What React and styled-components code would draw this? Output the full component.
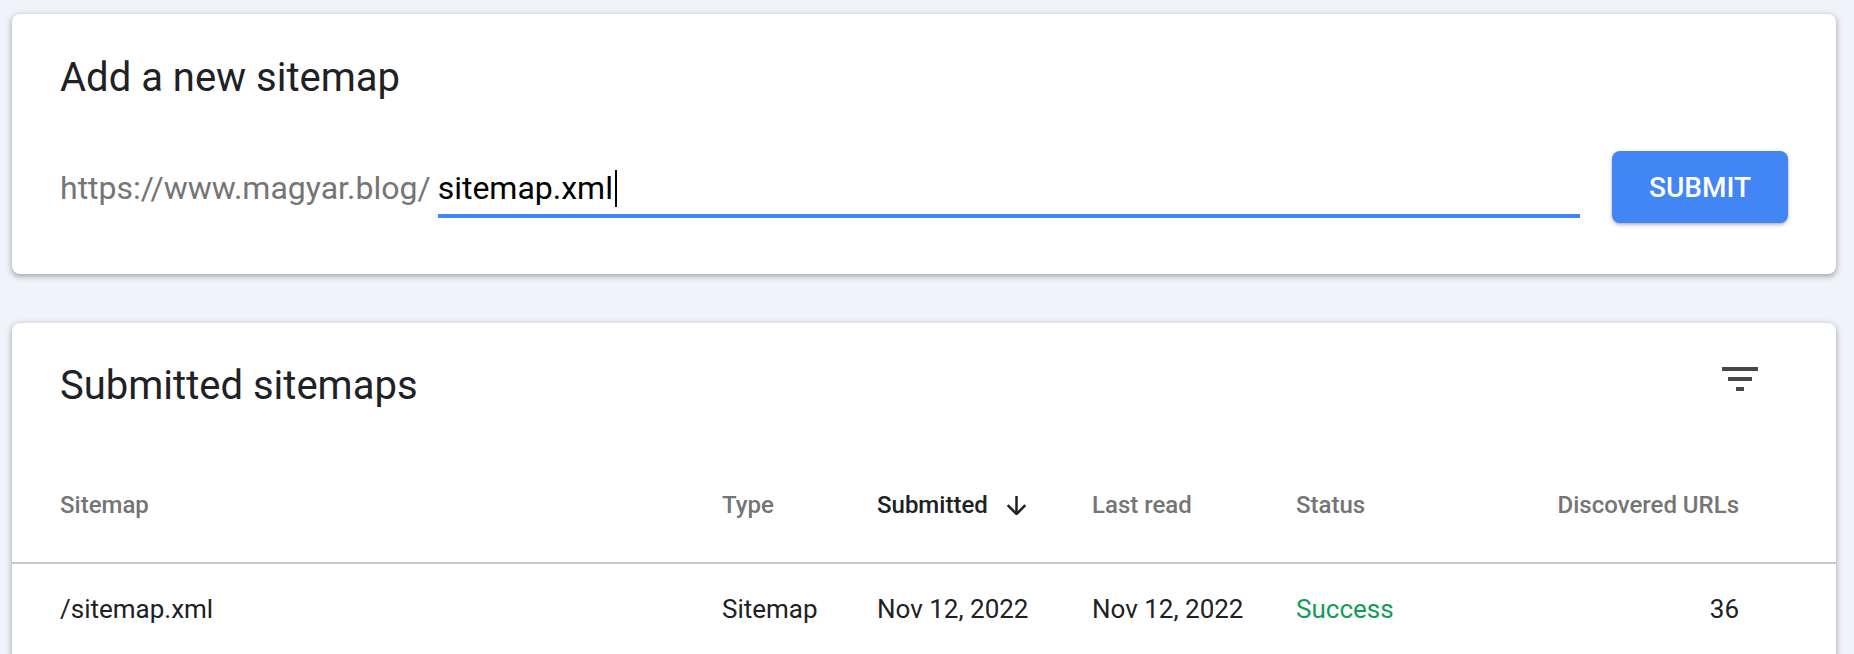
import React from 'react';
import styled, { createGlobalStyle } from 'styled-components';

const Global = createGlobalStyle`
  html, body { margin: 0; padding: 0; background: #f0f3fa; overflow: hidden; }
  body { font-family: Roboto, "Noto Sans", Arial, sans-serif; -webkit-font-smoothing: antialiased; }
  * { box-sizing: border-box; }
`;

const Page = styled.div`
  display: flex;
  flex-direction: column;
  gap: 49px;
  padding: 14px 18px 0 12px;
`;

const Card = styled.section`
  background: #fff;
  border-radius: 8px;
  box-shadow: 0 2px 4px rgba(60, 64, 67, 0.3), 0 2px 6px 2px rgba(60, 64, 67, 0.15);
`;

const AddCard = styled(Card)`
  padding: 40px 48px 51px;
`;

const Title = styled.h2`
  margin: 0;
  font-size: 40px;
  line-height: 48px;
  font-weight: 400;
  color: #202124;
`;

const InputRow = styled.div`
  display: flex;
  align-items: flex-end;
  gap: 32px;
  margin-top: 49px;
`;

const Field = styled.div`
  flex: 1;
  min-width: 0;
  display: flex;
  align-items: baseline;
  gap: 7px;
  margin-bottom: 5px;
`;

const Prefix = styled.span`
  font-size: 32px;
  line-height: 40px;
  color: #757575;
  white-space: nowrap;
`;

const InputBox = styled.div`
  flex: 1;
  font-size: 32px;
  line-height: 40px;
  color: #000;
  padding-bottom: 6px;
  border-bottom: 4px solid #4285f4;
  white-space: nowrap;
`;

const Caret = styled.span`
  display: inline-block;
  width: 2px;
  height: 37px;
  margin-left: 2px;
  background: #000;
  vertical-align: -8px;
`;

const SubmitButton = styled.button`
  flex: none;
  width: 176px;
  height: 72px;
  border: none;
  border-radius: 8px;
  background: #4285f4;
  color: #fff;
  font-family: Roboto, "Noto Sans", Arial, sans-serif;
  font-size: 28px;
  font-weight: 500;
  text-transform: uppercase;
  box-shadow: 0 2px 4px rgba(0, 0, 0, 0.24), 0 1px 2px rgba(0, 0, 0, 0.12);
  cursor: pointer;
`;

const SitemapsCard = styled(Card)`
  padding: 0;
`;

const CardHeader = styled.div`
  display: flex;
  justify-content: space-between;
  align-items: flex-start;
  padding: 20px 60px 0 48px;
`;

const HeaderTitle = styled(Title)`
  margin-top: 19px;
`;

const IconButton = styled.button`
  width: 72px;
  height: 72px;
  padding: 0;
  border: none;
  background: transparent;
  color: #474747;
  display: flex;
  align-items: center;
  justify-content: center;
`;

const Row = styled.div`
  display: grid;
  grid-template-columns: 662px 155px 215px 204px 1fr auto;
  align-items: end;
  padding: 0 97px 0 48px;
`;

const HeadRow = styled(Row)`
  padding-top: 74px;
  padding-bottom: 41px;
  border-bottom: 2px solid #c8c8c8;
`;

const BodyRow = styled(Row)`
  padding-top: 29px;
  padding-bottom: 40px;
`;

const HeadCell = styled.div`
  display: flex;
  align-items: center;
  justify-content: ${(p) => (p.$right ? 'flex-end' : 'flex-start')};
  gap: 18px;
  font-size: 24px;
  line-height: 32px;
  font-weight: 500;
  color: ${(p) => (p.$active ? '#202124' : '#757575')};
  white-space: nowrap;
`;

const Cell = styled.div`
  font-size: 26px;
  line-height: 32px;
  font-weight: 400;
  color: ${(p) => p.$color || '#202124'};
  text-align: ${(p) => (p.$right ? 'right' : 'left')};
  white-space: nowrap;
`;

const FilterIcon = () => (
  <svg width="48" height="48" viewBox="0 0 24 24" fill="currentColor" aria-hidden="true">
    <path d="M10 18h4v-2h-4v2zM3 6v2h18V6H3zm3 7h12v-2H6v2z" />
  </svg>
);

const ArrowDown = () => (
  <svg width="21" height="19" viewBox="0 0 21 19" fill="none" stroke="currentColor" strokeWidth="2.5" aria-hidden="true">
    <path d="M10.5 0V17" />
    <path d="M1.7 9.2L10.5 18L19.3 9.2" />
  </svg>
);

export default function App() {
  return (
    <>
      <Global />
      <Page>
        <AddCard>
          <Title>Add a new sitemap</Title>
          <InputRow>
            <Field>
              <Prefix>https://www.magyar.blog/</Prefix>
              <InputBox>
                sitemap.xml
                <Caret />
              </InputBox>
            </Field>
            <SubmitButton>Submit</SubmitButton>
          </InputRow>
        </AddCard>

        <SitemapsCard>
          <CardHeader>
            <HeaderTitle>Submitted sitemaps</HeaderTitle>
            <IconButton aria-label="Filter">
              <FilterIcon />
            </IconButton>
          </CardHeader>
          <HeadRow>
            <HeadCell>Sitemap</HeadCell>
            <HeadCell>Type</HeadCell>
            <HeadCell $active>
              Submitted
              <ArrowDown />
            </HeadCell>
            <HeadCell>Last read</HeadCell>
            <HeadCell>Status</HeadCell>
            <HeadCell $right>Discovered URLs</HeadCell>
          </HeadRow>
          <BodyRow>
            <Cell>/sitemap.xml</Cell>
            <Cell>Sitemap</Cell>
            <Cell>Nov 12, 2022</Cell>
            <Cell>Nov 12, 2022</Cell>
            <Cell $color="#0f9d58">Success</Cell>
            <Cell $right>36</Cell>
          </BodyRow>
        </SitemapsCard>
      </Page>
    </>
  );
}
